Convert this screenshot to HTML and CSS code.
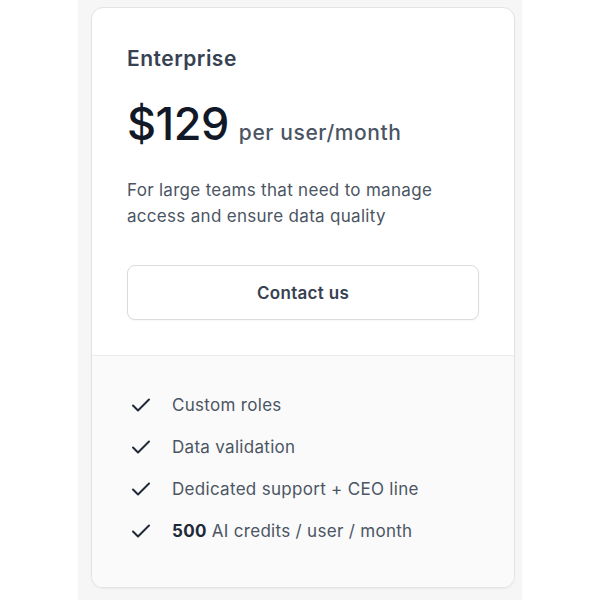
FILE: index.html
```html
<!DOCTYPE html>
<html lang="en">

<head>
    <meta charset="UTF-8">
    <meta name="viewport" content="width=device-width, initial-scale=1.0">
    <title>Pricing</title>
    <link rel="stylesheet" href="styles.css">
</head>

<body>
    <div class="column">
        <div class="plan">
            <div class="plan-top">
                <h2 class="plan-name">Enterprise</h2>
                <div class="price">
                    <span class="amount">$129</span>
                    <span class="period">per user/month</span>
                </div>
                <p class="desc">For large teams that need to manage access and ensure data quality</p>
                <button class="contact">Contact us</button>
            </div>
            <ul class="features">
                <li>
                    <svg class="check" viewBox="0 0 20 20"><path d="M2 10.5l5 5L18 4.5" /></svg>
                    <span>Custom roles</span>
                </li>
                <li>
                    <svg class="check" viewBox="0 0 20 20"><path d="M2 10.5l5 5L18 4.5" /></svg>
                    <span>Data validation</span>
                </li>
                <li>
                    <svg class="check" viewBox="0 0 20 20"><path d="M2 10.5l5 5L18 4.5" /></svg>
                    <span>Dedicated support + CEO line</span>
                </li>
                <li>
                    <svg class="check" viewBox="0 0 20 20"><path d="M2 10.5l5 5L18 4.5" /></svg>
                    <span><b>500</b> AI credits / user / month</span>
                </li>
            </ul>
        </div>
    </div>
</body>

</html>
```

FILE: styles.css
```css
body {
    margin: 0;
    background-color: #ffffff;
    font-family: Inter, 'Noto Sans', sans-serif;
    color: #374151;
}

.column {
    width: 444px;
    margin-left: 78px;
    min-height: 600px;
    padding: 7px 7px 0 13px;
    box-sizing: border-box;
    background-color: #f6f6f6;
}

.plan {
    background-color: #ffffff;
    border: 1px solid #e3e3e3;
    border-radius: 12px;
    overflow: hidden;
    box-shadow: 0 1px 2px rgba(0, 0, 0, 0.05);
}

.plan-top {
    padding: 37px 35px 35px 35px;
    border-bottom: 1px solid #ececec;
}

.plan-name {
    margin: 0;
    font-size: 21px;
    line-height: 28px;
    font-weight: 600;
    letter-spacing: 0.5px;
    color: #374151;
}

.price {
    margin-top: 23px;
    display: flex;
    align-items: baseline;
    gap: 10px;
}

.amount {
    font-size: 45px;
    line-height: 56px;
    font-weight: 500;
    color: #111827;
    letter-spacing: -0.5px;
}

.period {
    font-size: 21px;
    font-weight: 500;
    letter-spacing: 0.6px;
    color: #4b5563;
}

.desc {
    margin: 25px 0 0 0;
    font-size: 17px;
    line-height: 26px;
    letter-spacing: 0.3px;
    color: #4b5563;
}

.contact {
    display: block;
    width: 100%;
    margin-top: 36px;
    height: 55px;
    background-color: #ffffff;
    border: 1px solid #dcdcdc;
    border-radius: 8px;
    font-family: inherit;
    font-size: 17px;
    font-weight: 600;
    letter-spacing: 0.3px;
    color: #374151;
    box-shadow: 0 1px 2px rgba(0, 0, 0, 0.04);
}

.features {
    list-style: none;
    margin: 0;
    padding: 28px 36px 35px 39px;
    background-color: #fafafa;
}

.features li {
    display: flex;
    align-items: center;
    gap: 21px;
    height: 42px;
    font-size: 17px;
    letter-spacing: 0.3px;
    color: #4b5563;
}

.features b {
    font-weight: 700;
    color: #1f2937;
}

.check {
    width: 20px;
    height: 20px;
    flex-shrink: 0;
    fill: none;
    stroke: #1f2937;
    stroke-width: 2;
    stroke-linecap: round;
    stroke-linejoin: round;
}
```
